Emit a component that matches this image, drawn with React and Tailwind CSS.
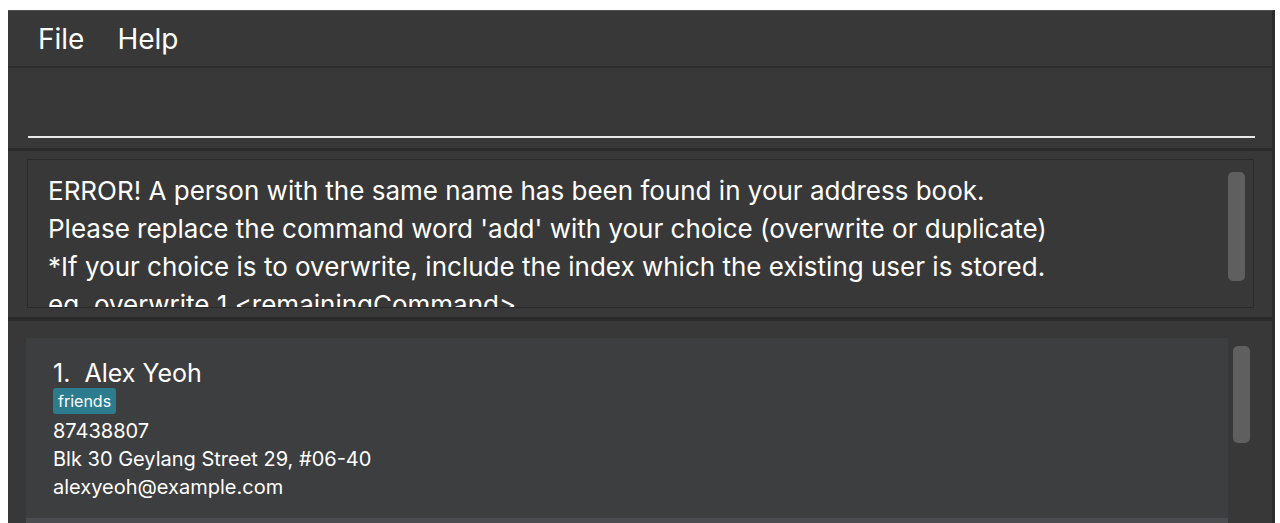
import React from "react";

// Address book window: menu bar, command box, result display, person list
const font = { fontFamily: "Inter, 'Liberation Sans', sans-serif" };

function PersonCard({ index, name, tags, phone, address, email }) {
  return (
    <div className="bg-[#3d3e40] pl-[27px] pt-[19px] pb-[14px] h-[180px] shrink-0">
      <div className="text-[25px] leading-[32px] text-white">
        {index}.&nbsp; {name}
      </div>
      <div className="flex gap-[6px] -mt-[1px]">
        {tags.map((t) => (
          <span
            key={t}
            className="bg-[#2c7b8e] text-white text-[16px] leading-[26px] px-[5px] rounded-[3px]"
          >
            {t}
          </span>
        ))}
      </div>
      <div className="text-[20px] leading-[28px] text-white mt-[3px]">{phone}</div>
      <div className="text-[20px] leading-[28px] text-white">{address}</div>
      <div className="text-[20px] leading-[28px] text-white">{email}</div>
    </div>
  );
}

export default function App() {
  return (
    <div className="w-[1280px] h-[523px] bg-white pt-[10px] pl-[8px] pr-[5px] overflow-hidden" style={font}>
      <div className="h-[600px] bg-[#383838] border-t border-[#4e4e4e] border-r-[3px] border-r-[#2c2c2c] flex flex-col">
        {/* Barre de menu */}
        <div className="h-[55px] flex items-center gap-[33px] pl-[30px] text-[28px] text-white shrink-0">
          <span>File</span>
          <span>Help</span>
        </div>
        <div className="h-[2px] bg-[#2d2d2d] shrink-0" />

        {/* Zone de commande */}
        <div className="h-[80px] flex flex-col justify-end pl-[20px] pr-[17px] pb-[10px] shrink-0">
          <div className="h-[2px] bg-[#e8e8e8]" />
        </div>
        <div className="h-[3px] bg-[#2b2b2b] shrink-0" />

        {/* Affichage du résultat */}
        <div className="h-[166px] pl-[19px] pr-[18px] pt-[8px] shrink-0">
          <div className="h-[149px] border border-[#2a2a2a] bg-[#383838] relative overflow-hidden">
            <div className="pl-[20px] pt-[12px] text-[26px] leading-[38px] text-white whitespace-pre">
              <div>ERROR! A person with the same name has been found in your address book.</div>
              <div>Please replace the command word 'add' with your choice (overwrite or duplicate)</div>
              <div>*If your choice is to overwrite, include the index which the existing user is stored.</div>
              <div>eg. overwrite 1 &lt;remainingCommand&gt;</div>
            </div>
            <div className="absolute right-[8px] top-[12px] w-[17px] h-[109px] rounded-[5px] bg-[#5f5f5f]" />
          </div>
        </div>
        <div className="h-[4px] bg-[#2b2b2b] shrink-0" />

        {/* Liste des personnes */}
        <div className="flex-1 pl-[18px] pt-[17px] pr-[44px] relative">
          <div className="flex flex-col">
            <PersonCard
              index={1}
              name="Alex Yeoh"
              tags={["friends"]}
              phone="87438807"
              address="Blk 30 Geylang Street 29, #06-40"
              email="alexyeoh@example.com"
            />
            <div className="h-[60px] bg-[#4a4c4f]" />
          </div>
          <div className="absolute right-[22px] top-[25px] w-[17px] h-[97px] rounded-[5px] bg-[#5f5f5f]" />
        </div>
      </div>
    </div>
  );
}
